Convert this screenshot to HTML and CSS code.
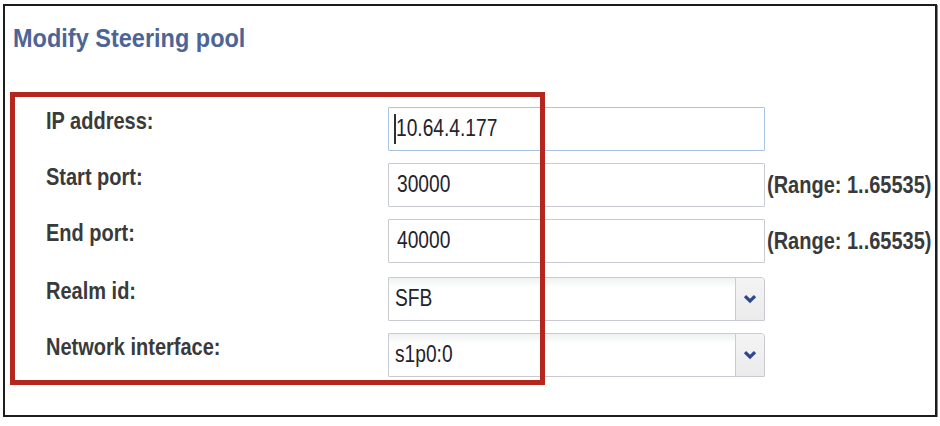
FILE: index.html
```html
<!DOCTYPE html>
<html>
<head>
<meta charset="utf-8">
<link rel="stylesheet" href="styles.css">
</head>
<body>
<div class="panel">
  <h1 class="title"><span class="tall">Modify Steering pool</span></h1>
  <div class="form">
    <div class="label"><span class="tall">IP address:</span></div>
    <div class="field focus"><span class="caret"></span><span class="value tall">10.64.4.177</span></div>
    <div class="hint"></div>

    <div class="label"><span class="tall">Start port:</span></div>
    <div class="field"><span class="value tall">30000</span></div>
    <div class="hint"><span class="tall">(Range: 1..65535)</span></div>

    <div class="label"><span class="tall">End port:</span></div>
    <div class="field"><span class="value tall">40000</span></div>
    <div class="hint"><span class="tall">(Range: 1..65535)</span></div>

    <div class="label shift"><span class="tall">Realm id:</span></div>
    <div class="field select shift"><span class="value tall">SFB</span><span class="spacer"></span><span class="arrow"><svg class="chev" width="14" height="10" viewBox="0 0 14 10"><path d="M2 2.2 L7 7 L12 2.2" fill="none" stroke="#2b4a8b" stroke-width="3.2"/></svg></span></div>
    <div class="hint shift"></div>

    <div class="label shift"><span class="tall">Network interface:</span></div>
    <div class="field select shift"><span class="value tall">s1p0:0</span><span class="spacer"></span><span class="arrow"><svg class="chev" width="14" height="10" viewBox="0 0 14 10"><path d="M2 2.2 L7 7 L12 2.2" fill="none" stroke="#2b4a8b" stroke-width="3.2"/></svg></span></div>
    <div class="hint shift"></div>
  </div>
  <div class="highlight"></div>
</div>
</body>
</html>
```

FILE: styles.css
```css
html, body {
  margin: 0;
  padding: 0;
  background: #ffffff;
}

.panel {
  position: relative;
  box-sizing: border-box;
  width: 934px;
  height: 413px;
  margin: 4px 0 0 3px;
  border: 2px solid #1c1c1c;
  box-shadow: 1px 1px 0 #8a8a8a;
  background: #ffffff;
  font-family: "Liberation Sans", Arial, sans-serif;
}

.tall {
  display: inline-block;
  transform: scaleY(1.2);
}

.title {
  margin: 18px 0 0 8px;
  font-size: 23.5px;
  line-height: 28px;
  height: 28px;
  font-weight: bold;
  color: #4d6596;
}

.title .tall {
  transform: scaleY(1.12);
}

.form {
  display: grid;
  grid-template-columns: 342px 377px auto;
  grid-auto-rows: 44px;
  row-gap: 12px;
  margin: 55px 0 0 41px;
}

.shift {
  margin-top: 2px;
}

.label {
  font-size: 20px;
  line-height: 23px;
  font-weight: bold;
  color: #3a3a3a;
}

.label .tall {
  transform-origin: 0 0;
}

.field {
  box-sizing: border-box;
  display: flex;
  align-items: center;
  height: 44px;
  padding-left: 8px;
  border: 1px solid #c9cbd3;
  border-radius: 1px;
  background: #ffffff;
  font-size: 19.2px;
  color: #23232e;
}

.field.focus {
  border-color: #a9c3e3;
  padding-left: 5px;
}

.caret {
  display: inline-block;
  width: 2px;
  height: 30px;
  background: #303030;
}

.select {
  padding-left: 6px;
  padding-right: 0;
  border-radius: 1px 4px 1px 1px;
  background: linear-gradient(#f0f2f2, #ffffff 10px);
}

.spacer {
  flex: 1;
}

.arrow {
  box-sizing: border-box;
  display: flex;
  align-items: center;
  justify-content: center;
  flex: 0 0 29px;
  height: 100%;
  border-left: 1px solid #c9cbd3;
  background: linear-gradient(#f4f4f4, #ebebeb);
  border-radius: 0 3px 0 0;
}

.chev {
  flex: 0 0 auto;
  display: block;
}

.hint {
  display: flex;
  align-items: center;
  margin-left: 2px;
  font-size: 20px;
  font-weight: bold;
  color: #3a3a3a;
  white-space: nowrap;
}

.highlight {
  position: absolute;
  left: 5px;
  top: 86px;
  box-sizing: border-box;
  width: 535px;
  height: 293px;
  border: 5px solid #b3271f;
  pointer-events: none;
}
```
